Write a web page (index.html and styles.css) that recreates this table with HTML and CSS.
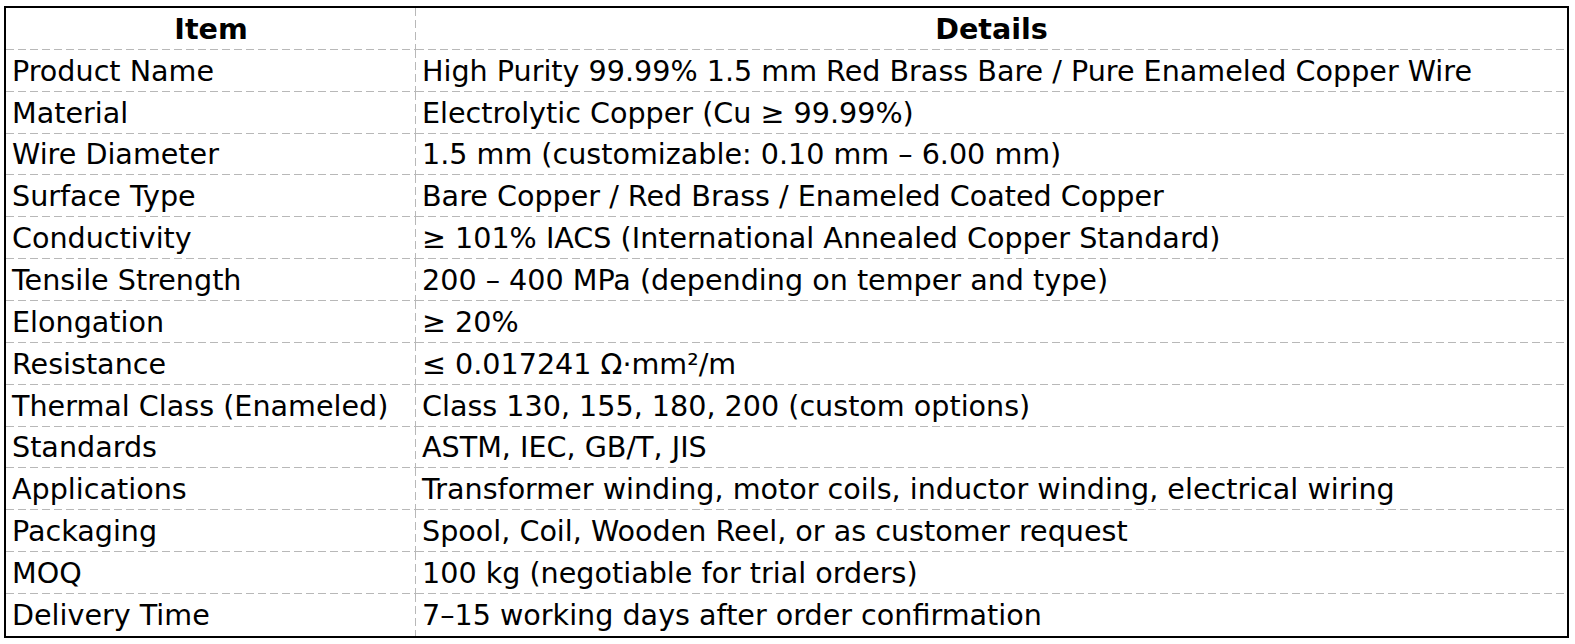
FILE: index.html
```html
<!DOCTYPE html>
<html>
<head>
<meta charset="utf-8">
<link rel="stylesheet" href="styles.css">
</head>
<body>
<table class="spec">
  <colgroup><col class="c1"><col class="c2"></colgroup>
  <thead>
    <tr><th>Item</th><th>Details</th></tr>
  </thead>
  <tbody>
    <tr><td>Product Name</td><td>High Purity 99.99% 1.5 mm Red Brass Bare / Pure Enameled Copper Wire</td></tr>
    <tr><td>Material</td><td>Electrolytic Copper (Cu ≥ 99.99%)</td></tr>
    <tr><td>Wire Diameter</td><td>1.5 mm (customizable: 0.10 mm – 6.00 mm)</td></tr>
    <tr><td>Surface Type</td><td>Bare Copper / Red Brass / Enameled Coated Copper</td></tr>
    <tr><td>Conductivity</td><td>≥ 101% IACS (International Annealed Copper Standard)</td></tr>
    <tr><td>Tensile Strength</td><td>200 – 400 MPa (depending on temper and type)</td></tr>
    <tr><td>Elongation</td><td>≥ 20%</td></tr>
    <tr><td>Resistance</td><td>≤ 0.017241 Ω·mm²/m</td></tr>
    <tr><td>Thermal Class (Enameled)</td><td>Class 130, 155, 180, 200 (custom options)</td></tr>
    <tr><td>Standards</td><td>ASTM, IEC, GB/T, JIS</td></tr>
    <tr><td>Applications</td><td>Transformer winding, motor coils, inductor winding, electrical wiring</td></tr>
    <tr><td>Packaging</td><td>Spool, Coil, Wooden Reel, or as customer request</td></tr>
    <tr><td>MOQ</td><td>100 kg (negotiable for trial orders)</td></tr>
    <tr><td>Delivery Time</td><td>7–15 working days after order confirmation</td></tr>
  </tbody>
</table>
</body>
</html>
```
FILE: styles.css
```css
html, body {
  margin: 0;
  padding: 0;
  background: #ffffff;
}
body {
  padding: 6px 0 0 4px;
  font-family: "DejaVu Sans", sans-serif;
  color: #000;
}
.spec {
  border-collapse: separate;
  border-spacing: 0;
  border: 2px solid #000;
  width: 1565px;
  table-layout: fixed;
}
.c1 { width: 410px; }
.c2 { width: 1151px; }
.spec th, .spec td {
  height: 41.87px;
  padding: 0 0 4px 6px;
  box-sizing: border-box;
  vertical-align: bottom;
  text-align: left;
  font-size: 28.6px;
  line-height: 34px;
  white-space: nowrap;
  background-image:
    repeating-linear-gradient(to right, #b8b8b8 0 8px, transparent 8px 12px),
    repeating-linear-gradient(to bottom, #b8b8b8 0 8px, transparent 8px 12px);
  background-size: 100% 1px, 1px 100%;
  background-position: left bottom, right top;
  background-repeat: no-repeat;
}
.spec td:last-child, .spec th:last-child {
  background-image: repeating-linear-gradient(to right, #b8b8b8 0 8px, transparent 8px 12px);
  background-size: 100% 1px;
  background-position: left bottom;
}
.spec tbody tr:last-child td {
  background-image: repeating-linear-gradient(to bottom, #b8b8b8 0 8px, transparent 8px 12px);
  background-size: 1px 100%;
  background-position: right top;
}
.spec tbody tr:last-child td:last-child {
  background-image: none;
}
.spec th {
  text-align: center;
  font-weight: bold;
  padding-left: 0;
}
```
